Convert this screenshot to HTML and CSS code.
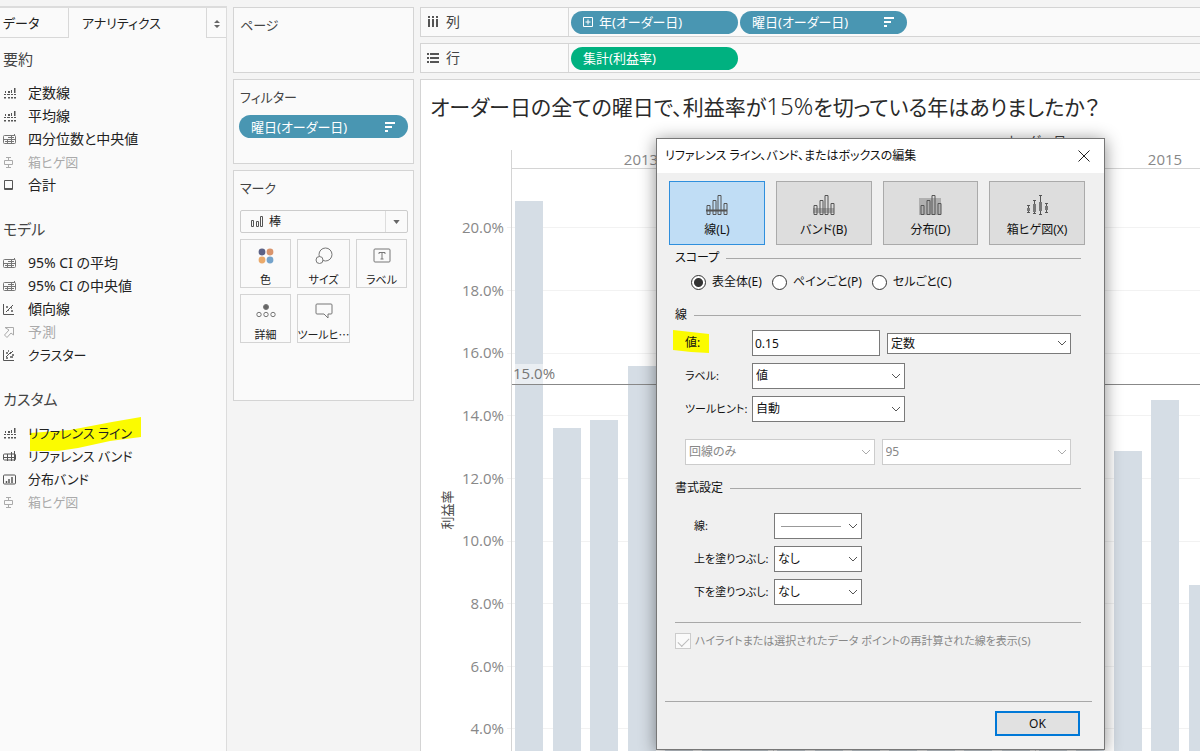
FILE: index.html
```html
<!DOCTYPE html>
<html lang="ja">
<head>
<meta charset="utf-8">
<title>リファレンス ライン</title>
<link rel="stylesheet" href="styles.css">
</head>
<body>
<svg class="defs" aria-hidden="true">
  <symbol id="i-line" viewBox="0 0 14 14"><path d="M1 11h2v1.500H1zM5 11h2v1.500H5zM8 11h2v1.500H8zM11 11h2v1.500h-2zM1 8h2v1H1zM4 8h3v1H4zM8 8h2v1H8zM11 8h2v1h-2zM2 5h1v2H2zM5 5h2v2H5zM8 4h1v3H8zM11 2h1.500v5H11z" fill="#555" stroke="none"/></symbol>
  <symbol id="i-quart" viewBox="0 0 14 14"><path d="M.5 4.500q0-1 1-1h10q1 0 1 1v6q0 1-1 1h-10q-1 0-1-1zM0 7.500h13M4.500 7.500v4M8.500 4v7.500M2 9.500h9M5 5.500h6M11.500 2v2" stroke="#777"/></symbol>
  <symbol id="i-box" viewBox="0 0 14 14"><path d="M1.500 5.500h8v4h-8zM5.500 2.500v3M3 2.500h5M5.500 10v2.500M3 12.500h5"/></symbol>
  <symbol id="i-total" viewBox="0 0 14 14"><path d="M1.500 2.500h8v9h-8zM1.500 10.500h8"/></symbol>
  <symbol id="i-trend" viewBox="0 0 14 14"><path d="M.5 2v10.500H11M3 10l7-7"/><path d="M3 5h2M5 8h1M8 9h2M8 6h1" stroke-width="1.500"/></symbol>
  <symbol id="i-fore" viewBox="0 0 14 14"><path d="M2 2.500h8.500V10L8 8l-4 4.500L1.500 10 6 5z"/></symbol>
  <symbol id="i-clus" viewBox="0 0 14 14"><path d="M.5 2v10.500H11M3 9l5-5M7 6l3-3"/><path d="M3 5h2M5 3h1M7 9h3M9 7h2M3 10h2" stroke-width="1.500"/></symbol>
  <symbol id="i-band" viewBox="0 0 14 14"><path d="M.5 6q0-1 1-1h10q1 0 1 1v4q0 1-1 1h-10q-1 0-1-1zM0 8.500h13M4.500 5v7M8.500 3v9M11.500 2v10"/></symbol>
  <symbol id="i-dist" viewBox="0 0 14 14"><path d="M.5 4q0-1 1-1h10q1 0 1 1v7q0 1-1 1h-10q-1 0-1-1z"/><path d="M3.500 9v2M6 7v4M9 5v6" stroke-width="1.500"/></symbol>
  <symbol id="i-sort" viewBox="0 0 12 12"><path d="M1 2h10M1 6h7M1 10h3" stroke-width="2"/></symbol>
  <symbol id="i-chev" viewBox="0 0 10 6"><path d="M1 1l4 4 4-4"/></symbol>
  <symbol id="i-bars" viewBox="0 0 22 22"><path d="M1.500 11.500h3v9h-3zM7.500 6.500h3v14h-3zM12.500 1.500h3v19h-3zM18.500 9.500h3v11h-3z"/></symbol>
</svg>
<main class="app">
  <aside class="side">
    <div class="tabs">
      <button class="tab data">データ</button>
      <button class="tab active">アナリティクス</button>
      <button class="updown" aria-label="切り替え"><svg width="6" height="8" viewBox="0 0 6 8"><path d="M3 0l3 3H0zM3 8L0 5h6z"/></svg></button>
    </div>
    <section class="group">
      <h2>要約</h2>
      <ul>
        <li><svg class="ic"><use href="#i-line"/></svg>定数線</li>
        <li><svg class="ic"><use href="#i-line"/></svg>平均線</li>
        <li><svg class="ic"><use href="#i-quart"/></svg>四分位数と中央値</li>
        <li class="off kana"><svg class="ic"><use href="#i-box"/></svg>箱ヒゲ図</li>
        <li><svg class="ic"><use href="#i-total"/></svg>合計</li>
      </ul>
    </section>
    <section class="group">
      <h2>モデル</h2>
      <ul>
        <li><svg class="ic"><use href="#i-quart"/></svg>95% CI の平均</li>
        <li><svg class="ic"><use href="#i-quart"/></svg>95% CI の中央値</li>
        <li><svg class="ic"><use href="#i-trend"/></svg>傾向線</li>
        <li class="off"><svg class="ic"><use href="#i-fore"/></svg>予測</li>
        <li class="kana"><svg class="ic"><use href="#i-clus"/></svg>クラスター</li>
      </ul>
    </section>
    <section class="group">
      <h2>カスタム</h2>
      <ul>
        <li class="marked kana"><svg class="marker" width="112" height="36" viewBox="0 0 112 36"><path d="M0 16L40 13 82 5 111 0V20L80 24 48 31 28 34H0z"/></svg><svg class="ic"><use href="#i-line"/></svg>リファレンス ライン</li>
        <li class="kana"><svg class="ic"><use href="#i-band"/></svg>リファレンス バンド</li>
        <li class="kana"><svg class="ic"><use href="#i-dist"/></svg>分布バンド</li>
        <li class="off kana"><svg class="ic"><use href="#i-box"/></svg>箱ヒゲ図</li>
      </ul>
    </section>
  </aside>

  <div class="cards">
    <section class="card pages"><h3>ページ</h3></section>
    <section class="card filters"><h3>フィルター</h3>
      <button class="pill">曜日(オーダー日)<svg class="sort"><use href="#i-sort"/></svg></button>
    </section>
    <section class="card marks"><h3>マーク</h3>
      <button class="marktype"><svg class="mbars" width="14" height="13" viewBox="0 0 14 13"><path d="M1.500 5.500h2v6h-2zM6.500 6.500h2v5h-2zM10.500 1.500h2v10h-2z"/></svg><span>棒</span><span class="drop"><svg width="7" height="4" viewBox="0 0 8 5"><path d="M0 0h8L4 5z"/></svg></span></button>
      <div class="tiles">
        <button class="tile"><svg width="20" height="20" viewBox="0 0 20 20"><circle cx="6" cy="6" r="3.400" fill="#5c6286"/><circle cx="14" cy="6" r="3.400" fill="#d9946c"/><circle cx="6" cy="14" r="3.400" fill="#eaaa6b"/><circle cx="14" cy="14" r="3.400" fill="#74a3cb"/></svg>色</button>
        <button class="tile"><svg class="ln" width="20" height="20" viewBox="0 0 20 20"><circle cx="11.500" cy="8.500" r="6.500"/><circle cx="5.500" cy="14" r="3.500" fill="#fafafa"/></svg>サイズ</button>
        <button class="tile"><svg class="ln" width="20" height="20" viewBox="0 0 20 20"><rect x="2" y="3" width="16" height="13" rx="1"/><path d="M7 8V6.500h6V8M10 6.500V13M8.500 13h3"/></svg>ラベル</button>
        <button class="tile"><svg class="ln" width="20" height="20" viewBox="0 0 20 20"><circle cx="10" cy="6" r="2.500" fill="#666"/><circle cx="3" cy="13.500" r="2.200"/><circle cx="10" cy="13.500" r="2.200"/><circle cx="17" cy="13.500" r="2.200"/></svg>詳細</button>
        <button class="tile"><svg class="ln" width="20" height="20" viewBox="0 0 20 20"><path d="M3 3h14q1 0 1 1v8q0 1-1 1h-3v4l-4-4H3q-1 0-1-1V4q0-1 1-1z"/></svg>ツールヒ…</button>
      </div>
    </section>
  </div>

  <div class="work">
    <div class="shelf"><div class="name"><svg width="12" height="14" viewBox="0 0 12 14"><path d="M2 1v2M6 1v2M10 1v2M2 4v8M6 4v8M10 4v8" stroke-width="2"/></svg>列</div>
      <button class="pill wide"><svg class="plus" width="10" height="10" viewBox="0 0 10 10"><path d="M.5 .5h9v9h-9zM5 2.500v5M2.500 5h5"/></svg>年(オーダー日)</button>
      <button class="pill wide">曜日(オーダー日)<svg class="sort"><use href="#i-sort"/></svg></button>
    </div>
    <div class="shelf"><div class="name"><svg width="12" height="14" viewBox="0 0 12 14"><path d="M0 3h2M3 3h9M0 7h2M3 7h9M0 11h2M3 11h9" stroke-width="2"/></svg>行</div>
      <button class="pill wide green">集計(利益率)</button>
    </div>
    <section class="view">
      <h1>オーダー日の全ての曜日で、利益率が<span>15%</span>を切っている年はありましたか？</h1>
      <svg class="chart" role="img" aria-label="利益率">
        <g transform="translate(-421 -130)">
          <path class="grid" d="M507 227.500H2400M507 290.500H2400M507 353.500H2400M507 415.500H2400M507 478.500H2400M507 541.500H2400M507 603.500H2400M507 666.500H2400M507 728.500H2400"/>
          <path class="bar" d="M515 201h28v600h-28zM553 428h28v400h-28zM590 420h28v400h-28zM628 366h28v400h-28zM665 400h28v400h-28zM702 400h28v400h-28zM740 400h28v400h-28zM777 400h28v400h-28zM815 400h28v400h-28zM852 400h28v400h-28zM889 400h28v400h-28zM927 400h28v400h-28zM964 400h28v400h-28zM1002 400h28v400h-28zM1039 400h28v400h-28zM1076 500h28v400h-28zM1114 451h28v400h-28zM1151 400h28v400h-28zM1189 585h28v400h-28z"/>
          <path class="rule" d="M511.500 150V800M773.500 150V800M1035.500 150V800M511 168.500H2400"/>
          <rect class="refback" x="512" y="364" width="45" height="20"/>
          <path class="ref" d="M512 384.500H2400"/>
          <g class="tick">
            <text x="641" y="165" text-anchor="middle">2013</text><text x="1165" y="165" text-anchor="middle">2015</text>
            <g text-anchor="end"><text x="504" y="233">20.0%</text><text x="504" y="296">18.0%</text><text x="504" y="358">16.0%</text><text x="504" y="421">14.0%</text><text x="504" y="484">12.0%</text><text x="504" y="546">10.0%</text><text x="504" y="609">8.0%</text><text x="504" y="672">6.0%</text><text x="504" y="734">4.0%</text></g>
            <text class="reflabel" x="513" y="379">15.0%</text>
          </g>
          <text class="axis" x="1035" y="146" text-anchor="middle">オーダー日</text>
          <text class="axis" transform="translate(452 510) rotate(-90)" text-anchor="middle">利益率</text>
        </g>
      </svg>
    </section>
  </div>
</main>

<form class="dialog" role="dialog" aria-labelledby="dlg-title">
  <header><h2 id="dlg-title">リファレンス ライン、バンド、またはボックスの編集</h2><button type="button" class="close" aria-label="閉じる"><svg width="12" height="12" viewBox="0 0 12 12"><path d="M.5 .5l11 11M11.500 .5l-11 11"/></svg></button></header>
  <div class="kinds">
    <button type="button" class="kind on"><svg><use href="#i-bars"/><path d="M1 16.500h21" stroke-width="2"/></svg>線(L)</button>
    <button type="button" class="kind"><svg><path d="M1 14h21v5H1z" fill="#aaa" stroke="none"/><use href="#i-bars"/></svg>バンド(B)</button>
    <button type="button" class="kind"><svg><path d="M0 4h22v17H0z" fill="#b0b0b0" stroke="none"/><use href="#i-bars"/></svg>分布(D)</button>
    <button type="button" class="kind"><svg><path d="M2.500 11v8M8.500 6v14M14.500 1v20M20.500 9v10M1 11.500h3M7 6.500h3M13 1.500h3M19 9.500h3M1 18.500h3M7 19.500h3M13 20.500h3M19 18.500h3"/><path d="M2.500 14v3M8.500 10v8M14.500 8v9M20.500 12v4" stroke="#777" stroke-width="3"/></svg>箱ヒゲ図(X)</button>
  </div>
  <div class="content">
    <h3 class="rulehead">スコープ</h3>
    <div class="radios">
      <label><input type="radio" name="scope" checked>表全体(E)</label>
      <label><input type="radio" name="scope">ペインごと(P)</label>
      <label><input type="radio" name="scope">セルごと(C)</label>
    </div>
    <h3 class="rulehead">線</h3>
    <div class="rows">
      <div class="row"><label class="hl" for="v"><svg class="marker2" width="36" height="24" viewBox="0 0 36 24"><path d="M0 0L18 2 36 4V23L18 22 0 20z"/></svg>値:</label><input class="box" id="v" type="text" value="0.15"><span class="sel grow short"><select aria-label="値の種類"><option>定数</option></select><svg><use href="#i-chev"/></svg></span></div>
      <div class="row"><label for="lb">ラベル:</label><span class="sel mid"><select id="lb"><option>値</option></select><svg><use href="#i-chev"/></svg></span></div>
      <div class="row"><label for="tt">ツールヒント:</label><span class="sel mid"><select id="tt"><option>自動</option></select><svg><use href="#i-chev"/></svg></span></div>
    </div>
    <div class="row dis">
      <span class="sel grow"><select disabled aria-label="線の対象"><option>回線のみ</option></select><svg><use href="#i-chev"/></svg></span>
      <span class="sel grow"><select disabled aria-label="信頼度"><option>95</option></select><svg><use href="#i-chev"/></svg></span>
    </div>
    <h3 class="rulehead">書式設定</h3>
    <div class="rows fmt">
      <div class="row"><label for="f1">線:</label><span class="sel small"><select id="f1"><option></option></select><i></i><svg><use href="#i-chev"/></svg></span></div>
      <div class="row"><label for="f2">上を塗りつぶし:</label><span class="sel small"><select id="f2"><option>なし</option></select><svg><use href="#i-chev"/></svg></span></div>
      <div class="row"><label for="f3">下を塗りつぶし:</label><span class="sel small"><select id="f3"><option>なし</option></select><svg><use href="#i-chev"/></svg></span></div>
    </div>
    <label class="check"><input type="checkbox" checked disabled>ハイライトまたは選択されたデータ ポイントの再計算された線を表示(S)</label>
  </div>
  <footer><button type="button" class="ok">OK</button></footer>
</form>
</body>
</html>
```

FILE: styles.css
```css
* { box-sizing: border-box; }
body {
  margin: 0;
  height: 100vh;
  overflow: hidden;
  position: relative;
  background: #f4f4f4;
  color: #222;
  font: 14px/20px "Noto Sans", "Noto Sans CJK JP", sans-serif;
  font-feature-settings: "palt";
}
h1, h2, h3, ul { margin: 0; padding: 0; font-weight: 400; }
button, input, select { font: inherit; color: inherit; font-feature-settings: inherit; margin: 0; border-radius: 0; }
button { padding: 0; background: none; border: 0; }
svg { fill: none; stroke: #555; flex: none; }
.defs { position: absolute; width: 0; height: 0; }

.app { display: flex; gap: 6px; height: 100%; padding-top: 6px; }

/* analytics pane */
.side { width: 227px; flex: none; background: #fafafa; border: solid #dcdcdc; border-width: 2px 1px 0 0; }
.tabs { display: flex; height: 30px; }
.tab { font-size: 13px; text-align: left; }
.tab.data { width: 69px; padding-left: 3px; border: solid #d8d8d8; border-width: 0 1px 1px 0; }
.tab.active { flex: 1; padding-left: 13px; }
.updown { width: 20px; border: solid #d8d8d8; border-width: 0 0 1px 1px; }
.updown path { fill: #666; stroke: none; }
.group { padding: 9px 0 0 3px; }
.group + .group { padding-top: 21px; }
.group h2 { font-size: 15px; line-height: 24px; color: #444; }
.group ul { list-style: none; margin-top: 10px; }
.group li { position: relative; display: flex; align-items: center; gap: 11px; height: 23px; }
.group li.kana { font-size: 13px; }
.group .ic { width: 14px; height: 14px; }
.group li.off { color: #aaa; }
.off .ic { stroke: #aaa; }
.marked { isolation: isolate; }
.marker { position: absolute; left: 27px; top: -4px; z-index: -1; }
.marker path, .marker2 path { fill: #fbfb00; stroke: none; }

/* cards */
.cards { width: 181px; flex: none; display: flex; flex-direction: column; gap: 6px; padding-top: 1px; }
.card { background: #fafafa; border: 1px solid #d4d4d4; padding: 7px 5px; }
.card h3 { color: #444; font-size: 13px; line-height: 20px; padding-left: 1px; }
.pages { height: 66px; }
.filters { height: 85px; }
.marks { height: 231px; }
.pill { display: flex; align-items: center; width: 100%; height: 23px; padding: 0 12px; border-radius: 12px; background: #4996b2; color: #fff; font-size: 13px; white-space: nowrap; }
.filters .pill { margin-top: 8px; }
.sort { width: 12px; height: 12px; margin-left: auto; stroke: #fff; }
.plus { stroke: #fff; margin-right: 6px; }
.marktype { display: flex; align-items: center; width: 168px; height: 23px; margin: 12px 0 6px 1px; padding-left: 9px; gap: 5px; border: 1px solid #ccc; border-radius: 2px; font-size: 12px; }
.drop { margin-left: auto; width: 22px; height: 21px; display: grid; place-items: center; border-left: 1px solid #ddd; }
.drop path { fill: #666; stroke: none; }
.tiles { display: grid; grid-template-columns: 51px 53px 51px; gap: 6px; padding-left: 1px; }
.tile { height: 49px; border: 1px solid #d4d4d4; display: flex; flex-direction: column; align-items: center; gap: 4px; padding-top: 6px; font-family: "Noto Sans CJK JP", sans-serif; font-size: 11px; line-height: 18px; white-space: nowrap; }
.tile svg { stroke: none; }
.tile svg.ln { stroke: #777; }

/* shelves and chart */
.work { flex: 1; min-width: 0; display: flex; flex-direction: column; gap: 6px; padding-top: 1px; }
.shelf { display: flex; align-items: center; gap: 2px; height: 30px; flex: none; background: #fafafa; border: 1px solid #d4d4d4; border-right: 0; }
.name { display: flex; align-items: center; gap: 7px; width: 148px; height: 100%; padding-left: 6px; border-right: 1px solid #d8d8d8; color: #444; }
.pill.wide { width: 167px; }
.pill.green { background: #00b180; }
.view { flex: 1; min-height: 0; overflow: hidden; background: #fff; border: solid #d4d4d4; border-width: 1px 0 0 1px; padding-top: 10px; display: flex; flex-direction: column; }
.view h1 { font-size: 21px; line-height: 32px; height: 40px; padding-left: 9px; white-space: nowrap; color: #2a2a2a; }
.view h1 span { font-size: 24px; font-weight: 300; }
.chart { width: 100%; flex: 1; }
.chart text { stroke: none; }
.grid { stroke: #f2f2f2; }
.bar { fill: #d5dde5; stroke: none; }
.rule { stroke: #d4d4d4; }
.refback { fill: #fff; fill-opacity: .5; stroke: none; }
.ref { stroke: #888; }
.tick { font-size: 15px; fill: #888; font-family: "Open Sans", "Noto Sans", sans-serif; }
.reflabel { fill: #777; }
.axis { font-size: 13px; fill: #444; }

/* dialog window */
.dialog { position: absolute; left: 656px; top: 138px; width: 449px; background: #f0f0f0; border: 1px solid #777; box-shadow: 0 2px 16px rgba(0, 0, 0, .45); font-size: 12px; color: #111; }
.dialog header { display: flex; align-items: center; justify-content: space-between; height: 34px; padding: 0 14px 0 8px; background: #fff; }
.dialog header h2 { font-size: 12px; }
.close { display: grid; }
.close svg { stroke: #222; }
.kinds { display: grid; grid-template-columns: repeat(4, 1fr); gap: 11px; padding: 8px 19px 0 12px; }
.kind { height: 64px; display: flex; flex-direction: column; align-items: center; gap: 4px; padding-top: 12px; background: #ddd; border: 1px solid #aaa; }
.kind svg { width: 23px; height: 22px; }
.kind use { width: 22px; height: 22px; }
.kind.on { background: #c0ddf5; border-color: #2f8fdd; }
.content { padding: 3px 23px 0 18px; }
.rulehead { display: flex; align-items: center; gap: 7px; font-size: 12px; line-height: 20px; }
.rulehead::after { content: ""; flex: 1; border-top: 1px solid #a8a8a8; }
.radios { display: flex; gap: 10px; padding: 4px 0 13px 16px; }
.radios label { display: flex; align-items: center; gap: 6px; }
.radios input { appearance: none; width: 15px; height: 15px; border: 1px solid #333; border-radius: 50%; background: #fff; }
.radios input:checked { background: radial-gradient(circle, #333 4px, #fff 5px); }
.rows { display: grid; gap: 7px; padding: 5px 10px 0; }
.row { display: flex; align-items: center; gap: 7px; }
.row label { width: 60px; position: relative; font-size: 11px; white-space: nowrap; }
.row .hl { font-size: 12px; isolation: isolate; }
.marker2 { position: absolute; left: -12px; top: -3px; z-index: -1; }
.box { width: 128px; height: 26px; border: 1px solid #7a7a7a; background: #fff; padding: 0 2px; outline: 0; }
.sel { display: inline-grid; align-items: center; height: 26px; }
.sel > * { grid-area: 1 / 1; }
.sel select { appearance: none; width: 100%; height: 26px; border: 1px solid #7a7a7a; background: #fff; padding: 0 3px; }
.sel svg { width: 10px; height: 6px; justify-self: end; margin-right: 4px; pointer-events: none; }
.sel i { width: 60px; margin-left: 7px; border-top: 1px solid #999; pointer-events: none; }
.sel.grow { flex: 1; }
.sel.short, .sel.short select { height: 21px; }
.sel.mid { width: 153px; }
.sel.small { width: 88px; }
.dis { padding: 17px 10px 13px; }
.dis select { border-color: #ccc; color: #888; opacity: 1; }
.dis svg { stroke: #aaa; }
.fmt { padding: 15px 19px 17px; }
.fmt label { width: 73px; }
.check { display: flex; align-items: center; gap: 4px; padding: 8px 0 50px; border-top: 1px solid #a8a8a8; color: #888; font-size: 11px; white-space: nowrap; }
.check input { appearance: none; width: 16px; height: 16px; border: 1px solid #ccc; background: #fafafa; display: grid; place-items: center; }
.check input::before { content: ""; width: 10px; height: 5px; border: solid #bbb; border-width: 0 0 1px 1px; transform: rotate(-45deg); }
.dialog footer { display: flex; justify-content: flex-end; margin: 0 12px 0 8px; padding: 9px 12px 13px; border-top: 1px solid #a8a8a8; }
.ok { width: 85px; height: 25px; border: 2px solid #0078d7; background: #e1e1e1; font-size: 12px; line-height: 20px; }
```
